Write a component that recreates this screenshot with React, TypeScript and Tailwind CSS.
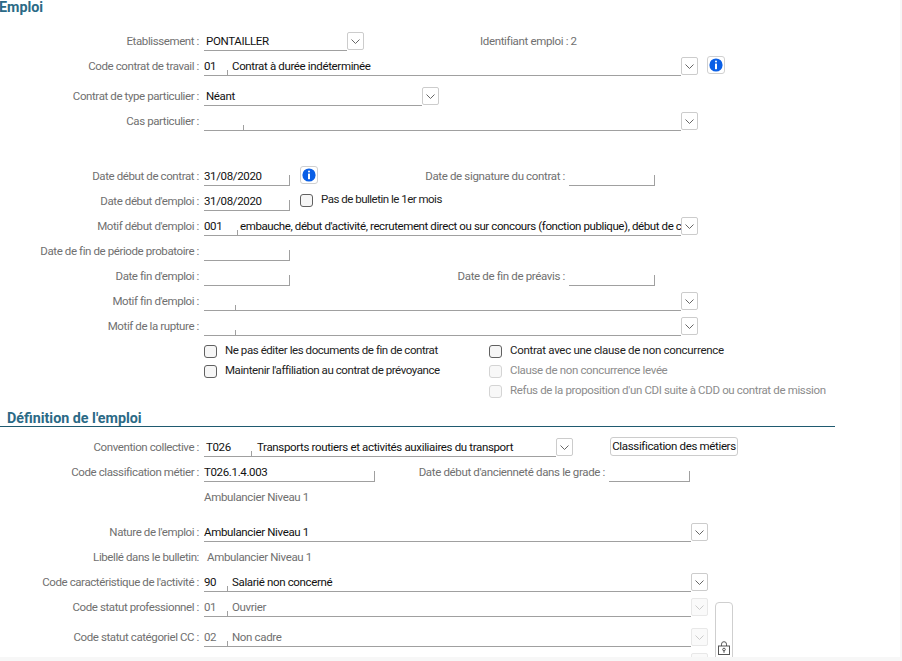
import React from "react";

function Chevron({ off }: { off?: boolean }) {
  return (
    <svg width="9" height="5" viewBox="0 0 9 5" fill="none">
      <path d="M0.5 0.5l4 4 4-4" stroke={off ? "#cccccc" : "#666666"} strokeWidth="1" />
    </svg>
  );
}

function DropButton({ off }: { off?: boolean }) {
  return (
    <div className={`mt-[3px] flex h-[18px] w-[17px] shrink-0 items-center justify-center rounded-[2px] border ${off ? "border-[#e8e8e8] bg-[#fafafa]" : "border-[#cccccc] bg-white"}`}>
      <Chevron off={off} />
    </div>
  );
}

function InfoButton({ className }: { className: string }) {
  return (
    <div className={`mt-[2px] flex h-[18px] w-[18px] shrink-0 items-center justify-center rounded-[3px] border border-[#d0d0d0] bg-white ${className}`}>
      <svg width="14" height="14" viewBox="0 0 14 14">
        <circle cx="7" cy="7" r="6.6" fill="#0a5fe6" />
        <rect x="6" y="2.6" width="2" height="2" rx="1" fill="#fff" />
        <rect x="6" y="5.6" width="2" height="5.6" fill="#fff" />
      </svg>
    </div>
  );
}

function Row({ label, className, children }: { label?: string; className?: string; children?: React.ReactNode }) {
  return (
    <div className={`flex h-[25px] shrink-0 items-start ${className ?? ""}`}>
      <div className="w-[199px] shrink-0 whitespace-nowrap text-right leading-[25px] tracking-[-0.4px] text-[#707070]">{label}</div>
      <div className="ml-[5px] flex min-w-0 flex-1 items-start">{children}</div>
    </div>
  );
}

function Combo({ width, codeWidth, code, text, off, textPad }: { width: string; codeWidth: string; code: string; text?: string; off?: boolean; textPad?: string }) {
  return (
    <>
      <div className={`flex h-[22px] shrink-0 overflow-hidden border-b border-[#a0a0a0] leading-[25px] ${width} ${off ? "text-[#707070]" : "text-[#111]"}`}>
        <div className={`shrink-0 ${codeWidth}`}>{code}</div>
        <div className="h-[5px] w-px shrink-0 self-end bg-[#a0a0a0]" />
        <div className={`whitespace-nowrap ${textPad ?? "pl-[4px]"}`}>{text}</div>
      </div>
      <DropButton off={off} />
    </>
  );
}

function Plain({ width, text, pad }: { width: string; text: string; pad?: string }) {
  return (
    <>
      <div className={`h-[22px] shrink-0 border-b border-[#a0a0a0] leading-[25px] text-[#111] ${pad ?? "pl-[2px]"} ${width}`}>{text}</div>
      <DropButton />
    </>
  );
}

function DateField({ width, text }: { width: string; text?: string }) {
  return (
    <div className={`flex h-[22px] shrink-0 justify-between border-b border-[#a0a0a0] leading-[25px] text-[#111] ${width}`}>
      <span>{text}</span>
      <span className="h-[10px] w-px self-end bg-[#a0a0a0]" />
    </div>
  );
}

function Check({ label, off, className }: { label: string; off?: boolean; className?: string }) {
  return (
    <div className={`flex h-[20px] items-center whitespace-nowrap ${off ? "text-[#8c8c8c]" : "text-[#222]"} ${className ?? ""}`}>
      <span className={`mr-[8px] h-[13px] w-[13px] shrink-0 rounded-[3px] border ${off ? "border-[#d4d4d4] bg-[#f8f8f8]" : "border-[#606060] bg-[#f6f6f6]"}`} />
      {label}
    </div>
  );
}

function Lbl({ children, className }: { children: React.ReactNode; className: string }) {
  return <div className={`shrink-0 whitespace-nowrap text-right leading-[25px] text-[#707070] ${className}`}>{children}</div>;
}

export default function App() {
  return (
    <div className="flex h-[661px] w-[902px] overflow-hidden bg-[#f7f7f7] font-['Roboto',sans-serif] text-[11.5px] tracking-[-0.35px]">
      <div className="flex h-[657px] w-[900px] shrink-0 flex-col overflow-hidden bg-white">
        <div className="h-[29px] shrink-0 text-[14.3px] font-bold leading-[14px] tracking-normal text-[#2b6a86]">
          <span className="-ml-[1px] block">Emploi</span>
        </div>

        <Row label="Etablissement :">
          <Plain width="w-[143px]" text="PONTAILLER" />
          <Lbl className="ml-[116px]">Identifiant emploi : 2</Lbl>
        </Row>
        <Row label="Code contrat de travail :">
          <Combo width="w-[477px]" codeWidth="w-[23px]" code="01" text="Contrat à durée indéterminée" />
          <InfoButton className="ml-[9px]" />
        </Row>
        <Row label="Contrat de type particulier :" className="mt-[5px]">
          <Plain width="w-[218px]" text="Néant" />
        </Row>
        <Row label="Cas particulier :">
          <Combo width="w-[477px]" codeWidth="w-[39px]" code="" />
        </Row>

        <Row label="Date début de contrat :" className="mt-[30px]">
          <DateField width="w-[86px]" text="31/08/2020" />
          <InfoButton className="ml-[10px]" />
          <Lbl className="w-[247px]">Date de signature du contrat :</Lbl>
          <DateField width="ml-[4px] w-[86px]" />
        </Row>
        <Row label="Date début d'emploi :">
          <DateField width="w-[86px]" text="31/08/2020" />
          <div className="ml-[10px] mt-[4px] flex h-[14px] items-center whitespace-nowrap tracking-[-0.5px] text-[#222]">
            <span className="mr-[8px] h-[13px] w-[13px] shrink-0 rounded-[3px] border border-[#606060] bg-[#f6f6f6]" />
            Pas de bulletin le 1er mois
          </div>
        </Row>
        <Row label="Motif début d'emploi :">
          <Combo width="w-[477px]" codeWidth="w-[33px]" code="001" text="embauche, début d'activité, recrutement direct ou sur concours (fonction publique), début de contrat" textPad="pl-[2px] tracking-[-0.4px]" />
        </Row>
        <Row label="Date de fin de période probatoire :">
          <DateField width="w-[86px]" />
        </Row>
        <Row label="Date fin d'emploi :">
          <DateField width="w-[86px]" />
          <Lbl className="w-[275px]">Date de fin de préavis :</Lbl>
          <DateField width="ml-[4px] w-[86px]" />
        </Row>
        <Row label="Motif fin d'emploi :">
          <Combo width="w-[477px]" codeWidth="w-[31px]" code="" />
        </Row>
        <Row label="Motif de la rupture :">
          <Combo width="w-[477px]" codeWidth="w-[31px]" code="" />
        </Row>

        <div className="ml-[204px] flex h-[72px] shrink-0 pt-[2px]">
          <div className="w-[285px] shrink-0 tracking-[-0.43px]">
            <Check label="Ne pas éditer les documents de fin de contrat" />
            <Check label="Maintenir l'affiliation au contrat de prévoyance" />
          </div>
          <div>
            <Check label="Contrat avec une clause de non concurrence" className="tracking-[-0.3px]" />
            <Check label="Clause de non concurrence levée" off />
            <Check label="Refus de la proposition d'un CDI suite à CDD ou contrat de mission" off />
          </div>
        </div>

        <div className="h-[16px] w-[835px] shrink-0 border-b border-[#1f5a70] pl-[7px] text-[14.3px] font-bold leading-[14px] tracking-normal text-[#2b6a86]">
          Définition de l'emploi
        </div>

        <Row label="Convention collective :" className="mt-[8px]">
          <Combo width="w-[352px]" codeWidth="w-[47px] pl-[2px]" code="T026" text="Transports routiers et activités auxiliaires du transport" textPad="pl-[5px]" />
          <div className="ml-[37px] mt-[2px] flex h-[19px] w-[128px] shrink-0 items-center justify-center whitespace-nowrap rounded-[3px] border border-[#cccccc] bg-white text-[#111]">
            Classification des métiers
          </div>
        </Row>
        <Row label="Code classification métier :">
          <DateField width="w-[171px]" text="T026.1.4.003" />
          <Lbl className="w-[230px]">Date début d'ancienneté dans le grade :</Lbl>
          <DateField width="ml-[4px] w-[81px]" />
        </Row>
        <Row>
          <span className="leading-[25px] text-[#707070]">Ambulancier Niveau 1</span>
        </Row>
        <Row label="Nature de l'emploi :" className="mt-[10px]">
          <Plain width="w-[487px]" text="Ambulancier Niveau 1" pad="pl-0" />
        </Row>
        <Row label="Libellé dans le bulletin:">
          <span className="ml-[3px] leading-[25px] text-[#707070]">Ambulancier Niveau 1</span>
        </Row>
        <Row label="Code caractéristique de l'activité :">
          <Combo width="w-[487px]" codeWidth="w-[23px]" code="90" text="Salarié non concerné" />
        </Row>
        <div className="flex min-h-0 flex-1">
          <div className="w-[708px] shrink-0">
            <Row label="Code statut professionnel :">
              <Combo width="w-[487px]" codeWidth="w-[23px]" code="01" text="Ouvrier" off />
            </Row>
            <Row label="Code statut catégoriel CC :" className="mt-[5px]">
              <Combo width="w-[487px]" codeWidth="w-[23px]" code="02" text="Non cadre" off />
            </Row>
            <div className="ml-[691px]">
              <DropButton off />
            </div>
          </div>
          <div className="ml-[7px] mt-[7px] flex h-[60px] w-[18px] shrink-0 items-end justify-center rounded-t-[4px] border border-[#cfcfcf] bg-white pb-[6px]">
            <svg width="12" height="14" viewBox="0 0 12 14" fill="none" stroke="#555" strokeWidth="1">
              <path d="M3.5 5V3.2a2.5 2.5 0 0 1 5 0V5" />
              <rect x="0.5" y="5" width="11" height="8.5" />
              <circle cx="6" cy="8.5" r="1.3" />
              <path d="M6 9.8v2" />
            </svg>
          </div>
        </div>
      </div>
    </div>
  );
}
